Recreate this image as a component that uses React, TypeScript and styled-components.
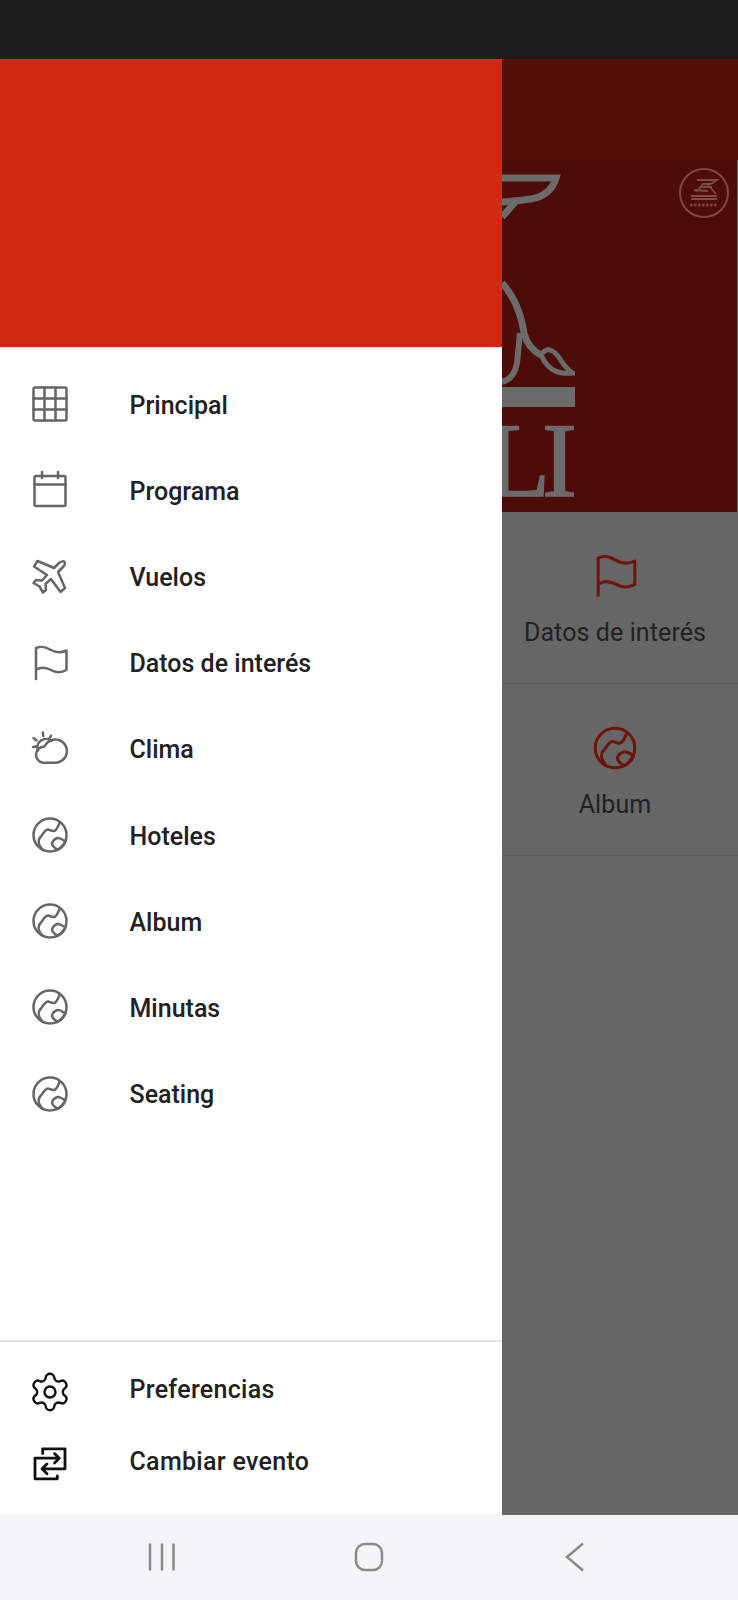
import React from 'react'
import styled, { createGlobalStyle } from 'styled-components'
import { Settings } from 'lucide-react'

const GlobalStyle = createGlobalStyle`
  html, body {
    margin: 0;
    padding: 0;
    background: #666666;
  }
  * {
    box-sizing: border-box;
  }
`

const Screen = styled.div`
  width: 738px;
  height: 1600px;
  display: flex;
  flex-direction: column;
  overflow: hidden;
  font-family: Roboto, 'Liberation Sans', sans-serif;
`

const StatusBar = styled.div`
  height: 59px;
  flex: none;
  background: #1c1c1c;
`

const Body = styled.div`
  flex: 1;
  position: relative;
  overflow: hidden;
  background: #666666;
`

const AppBar = styled.div`
  height: 101px;
  background: #531008;
`

const Hero = styled.div`
  height: 352px;
  margin-right: 1px;
  background: #4d0c08;
  position: relative;
  overflow: hidden;
  display: flex;
  flex-direction: column;
  align-items: flex-end;
  padding: 13px 162px 0 0;
`

const LogoMark = styled.svg`
  width: 120px;
  height: 235px;
  flex: none;
  display: block;
`

const Wordmark = styled.div`
  margin: 5px 6px 0 0;
  font-family: 'Liberation Serif', serif;
  font-size: 105px;
  line-height: 96px;
  letter-spacing: -8px;
  color: #6b6b6b;
  -webkit-text-stroke: 1.5px #6b6b6b;
  white-space: nowrap;
`

const Emblem = styled.svg`
  position: absolute;
  right: 7px;
  top: 7px;
  width: 52px;
  height: 52px;
`

const Tiles = styled.div`
  display: grid;
  grid-template-columns: repeat(3, 246px);
`

const Tile = styled.div<{ $column: number }>`
  grid-column: ${(props) => props.$column};
  height: 172px;
  display: flex;
  flex-direction: column;
  align-items: center;
  padding-top: 40px;
  border-bottom: 1px solid #5c5c5c;
  color: #222222;
  font-size: 25px;
  letter-spacing: 0.1px;
  line-height: 32px;
`

const TileIcon = styled.svg`
  width: 48px;
  height: 48px;
  margin-bottom: 16.5px;
  color: #6e1408;
`

const Drawer = styled.div`
  position: absolute;
  left: 0;
  top: 0;
  bottom: 0;
  width: 502px;
  background: #ffffff;
  display: flex;
  flex-direction: column;
`

const DrawerHeader = styled.div`
  height: 288px;
  flex: none;
  background: #d0290f;
`

const MainMenu = styled.div`
  flex: 1;
  padding-top: 14px;
`

const Row = styled.div<{ $height: number }>`
  height: ${(props) => props.$height}px;
  display: flex;
  align-items: center;
  padding-left: 30px;
  gap: 59.5px;
  font-size: 25px;
  font-weight: 500;
  color: #212121;
`

const MainLabel = styled.span`
  padding-top: 2px;
`

const FooterLabel = styled.span`
  padding-bottom: 5px;
  letter-spacing: 0.3px;
`

const RowIcon = styled.svg<{ $dark?: boolean }>`
  width: 40px;
  height: 40px;
  flex: none;
  color: ${(props) => (props.$dark ? '#111111' : '#666666')};
`

const GearIcon = styled(Settings)`
  width: 44px;
  height: 44px;
  margin: 0 -2px;
  flex: none;
  color: #111111;
`

const FooterMenu = styled.div`
  flex: none;
  height: 175px;
  border-top: 2px solid #e4e4e4;
  padding-top: 13.5px;
`

const NavBar = styled.div`
  height: 85px;
  flex: none;
  background: #f5f5f7;
  display: grid;
  grid-template-columns: repeat(3, 207.5px);
  justify-content: center;
  align-items: center;
  justify-items: center;
  padding-bottom: 2px;
`

const NavIcon = styled.svg`
  width: 40px;
  height: 40px;
  color: #8a8a8a;
`

const strokeProps = {
  fill: 'none',
  stroke: 'currentColor',
  strokeWidth: 2.5,
  strokeLinecap: 'round' as const,
  strokeLinejoin: 'round' as const,
}

const GridGlyph = () => (
  <g {...strokeProps}>
    <rect x="3.5" y="3.5" width="33" height="33" rx="1.5" />
    <path d="M14.5 3.5v33M25.5 3.5v33M3.5 14.5h33M3.5 25.5h33" />
  </g>
)

const CalendarGlyph = () => (
  <g {...strokeProps}>
    <rect x="4.5" y="6" width="31" height="30" rx="1.5" />
    <path d="M4.5 14.5h31M12 2v6M28 2v6" />
  </g>
)

const PlaneGlyph = () => (
  <g {...strokeProps}>
    <path d="M24 12 29 7C31 5 34 5 34.500 6 35.200 7 35 9 33 11L28 16 35 32 30.500 36 21 23 15.500 28 16 34 13 36.500 9.500 30.500 3.500 27 6 24 12 24.500 17 19 4 10.500 7.500 5Z" />
  </g>
)

const FlagGlyph = () => (
  <g {...strokeProps}>
    <path d="M6 36V5C12 2.500 16 4 21 7 26 10 31 10 36.500 7.500V27C31 30 26 30 21 27 16 24 11 24 6 26.500" />
  </g>
)

const CloudSunGlyph = () => (
  <g {...strokeProps}>
    <path d="M13 33.800H25A11.700 11.700 0 1 0 14.500 17.500 8.200 8.200 0 0 0 13 33.800Z" />
    <path d="M8 21.500A8.500 8.500 0 0 1 21.500 12M12.800 3.500l.5 3.500M21 6.500l-1.500 2.800M3.500 9l3 2.500M3 18l3.300-.4" />
  </g>
)

const GlobeGlyph = () => (
  <g {...strokeProps}>
    <circle cx="20" cy="20" r="16.500" />
    <path d="M30 7C28 11 27 16 23.500 16 20 16 19 13.500 16.500 15 13.500 17 12.500 20 10.500 22 7.500 25 8.500 30 12.500 34.500" />
    <path d="M22 28.500C22.500 25 27 22 30 23.500 32 24.500 34 25 35.500 26.500 34 30 31 33.500 27 35 26 33 22 32 22 28.500Z" />
  </g>
)

const SwapGlyph = () => (
  <g {...strokeProps} strokeWidth={2.8}>
    <path d="M12.700 9.500V4.800H35V24.800H12M17 20 12 24.800 17 29.700" />
    <path d="M27.300 32V34.800H5V14.200H29.300M24.500 9.500 29.300 14.200 24.500 19" />
  </g>
)

const glyphs: Record<string, React.FC> = {
  grid: GridGlyph,
  calendar: CalendarGlyph,
  plane: PlaneGlyph,
  flag: FlagGlyph,
  cloud: CloudSunGlyph,
  globe: GlobeGlyph,
}

const mainItems = [
  { label: 'Principal', glyph: 'grid' },
  { label: 'Programa', glyph: 'calendar' },
  { label: 'Vuelos', glyph: 'plane' },
  { label: 'Datos de interés', glyph: 'flag' },
  { label: 'Clima', glyph: 'cloud' },
  { label: 'Hoteles', glyph: 'globe' },
  { label: 'Album', glyph: 'globe' },
  { label: 'Minutas', glyph: 'globe' },
  { label: 'Seating', glyph: 'globe' },
]

const App: React.FC = () => {
  return (
    <Screen>
      <GlobalStyle />
      <StatusBar />
      <Body>
        <AppBar />
        <Hero>
          <LogoMark viewBox="0 0 120 235" fill="none" stroke="#6b6b6b">
            <path d="M47 5H101C97 18 88 24 76 26 66 27.500 57 28.500 47 29" strokeWidth="7" />
            <path d="M47 44 62 27" strokeWidth="7" />
            <path d="M47 110C58 122 66 140 69 160 72 172 78 178 86 182" strokeWidth="7" />
            <path d="M65 160 62 190C60 202 54 207 47 209" strokeWidth="6" />
            <path d="M86 182C92 172 100 178 105 186 110 194 114 198 118 200 106 201 94 200 86 182Z" strokeWidth="5" />
            <rect x="47" y="214" width="73" height="20" fill="#6b6b6b" stroke="none" />
          </LogoMark>
          <Wordmark>LI</Wordmark>
          <Emblem viewBox="0 0 52 52" fill="none" stroke="#7d4a47">
            <circle cx="26" cy="26" r="24" strokeWidth="2" />
            <path d="M19 13H39L33 17H25L18 25M30 18 38 27M22 20 34 20M16 23 30 24M13 29H39M13 32H39" strokeWidth="1.800" />
            <path d="M12 38H40" strokeWidth="2.500" strokeDasharray="2.500 1.500" />
          </Emblem>
        </Hero>
        <Tiles>
          <Tile $column={3}>
            <TileIcon viewBox="0 0 40 40">
              <FlagGlyph />
            </TileIcon>
            Datos de interés
          </Tile>
          <Tile $column={3}>
            <TileIcon viewBox="0 0 40 40">
              <GlobeGlyph />
            </TileIcon>
            Album
          </Tile>
        </Tiles>
        <Drawer>
          <DrawerHeader />
          <MainMenu>
            {mainItems.map((item) => {
              const Glyph = glyphs[item.glyph]
              return (
                <Row key={item.label} $height={86.2}>
                  <RowIcon viewBox="0 0 40 40">
                    <Glyph />
                  </RowIcon>
                  <MainLabel>{item.label}</MainLabel>
                </Row>
              )
            })}
          </MainMenu>
          <FooterMenu>
            <Row $height={72}>
              <GearIcon strokeWidth={1.3} />
              <FooterLabel>Preferencias</FooterLabel>
            </Row>
            <Row $height={72}>
              <RowIcon $dark viewBox="0 0 40 40">
                <SwapGlyph />
              </RowIcon>
              <FooterLabel>Cambiar evento</FooterLabel>
            </Row>
          </FooterMenu>
        </Drawer>
      </Body>
      <NavBar>
        <NavIcon viewBox="0 0 40 40" fill="none" stroke="currentColor" strokeWidth="2.500">
          <path d="M8 6.500v27M20 6.500v27M31.500 6.500v27" />
        </NavIcon>
        <NavIcon viewBox="0 0 40 40" fill="none" stroke="currentColor" strokeWidth="2.500">
          <rect x="7" y="7" width="26" height="26" rx="9" />
        </NavIcon>
        <NavIcon viewBox="0 0 40 40" fill="none" stroke="currentColor" strokeWidth="2.500">
          <path d="M26 6.500 10 20 26 33.500" />
        </NavIcon>
      </NavBar>
    </Screen>
  )
}

export default App
